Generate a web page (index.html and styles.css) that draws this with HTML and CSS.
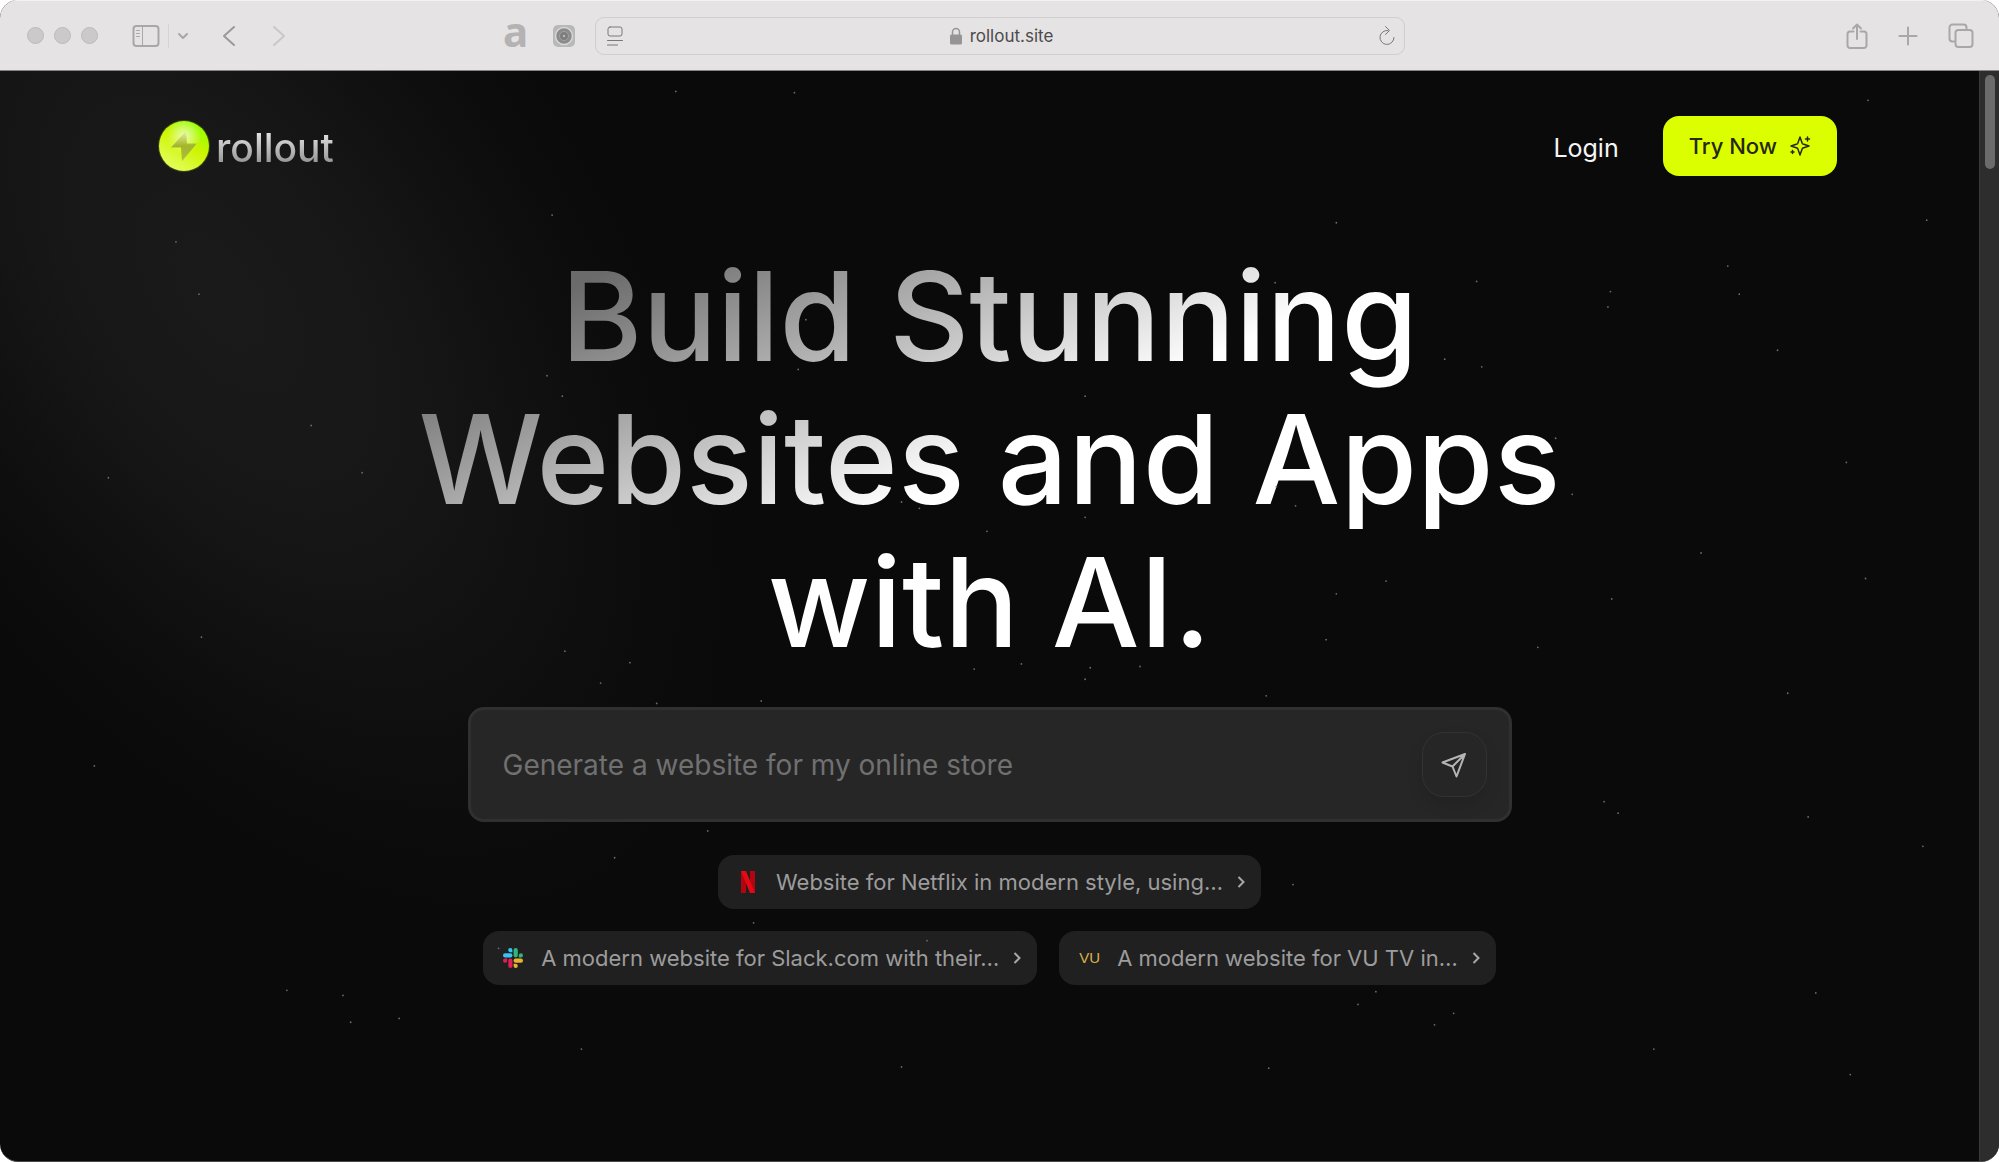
FILE: index.html
```
<!DOCTYPE html>
<html lang="en">
  <head>
    <meta charset="UTF-8" />
    <meta name="viewport" content="width=device-width, initial-scale=1.0" />
    <title>rollout</title>
    <link rel="stylesheet" href="styles.css">
  </head>
  <body>
    <div class="window">
      <header class="toolbar">
        <div class="toolbar-left">
          <div class="lights"><span></span><span></span><span></span></div>
          <button class="tool sidebar-btn" aria-label="Sidebar">
            <svg width="28" height="24" viewBox="0 0 28 24"><rect x="1.500" y="2" width="25" height="20" rx="3" /><path d="M10.500 2v20M4.500 6.500h3M4.500 9.500h3M4.500 12.500h3" /></svg>
          </button>
          <span class="divider"></span>
          <button class="tool menu-btn" aria-label="Tab groups">
            <svg width="12" height="12" viewBox="0 0 12 12"><path d="M2 4l4 4 4-4" /></svg>
          </button>
          <button class="tool back-btn" aria-label="Back">
            <svg width="14" height="22" viewBox="0 0 14 22"><path d="M12 2L2 11l10 9" /></svg>
          </button>
          <button class="tool forward-btn" aria-label="Forward">
            <svg width="14" height="22" viewBox="0 0 14 22"><path d="M2 2l10 9-10 9" /></svg>
          </button>
        </div>
        <div class="toolbar-middle">
          <button class="tool ext-a">a</button>
          <button class="tool ext-cam" aria-label="Camera extension">
            <svg width="22" height="22" viewBox="0 0 22 22"><rect width="22" height="22" rx="5" fill="#b9b8b9" stroke="none" /><circle cx="11" cy="11" r="8.500" fill="#8c8b8c" stroke="#d9d8d9" stroke-width="1.500" /><circle cx="11" cy="11" r="4.500" fill="#7d7c7d" stroke="#a3a2a3" stroke-width="1" /><circle cx="11" cy="11" r="1.200" fill="#bbb" stroke="none" /></svg>
          </button>
          <div class="address">
            <button class="tool reader-btn" aria-label="Reader">
              <svg width="18" height="22" viewBox="0 0 18 22"><rect x="2" y="2" width="14" height="9" rx="2" /><path d="M1.500 15.500h15M1.500 20h10" /></svg>
            </button>
            <a class="url" href="#">
              <svg width="14" height="18" viewBox="0 0 14 18"><path d="M3.500 8V5a3.500 3.500 0 0 1 7 0v3" fill="none" stroke="#969596" stroke-width="1.500" /><rect x="1" y="7.500" width="12" height="10" rx="1.500" fill="#969596" /></svg>
              <span>rollout.site</span>
            </a>
            <button class="tool reader-btn" aria-label="Reload">
              <svg width="18" height="22" viewBox="0 0 18 22"><path d="M10 5.500A7 7 0 1 0 16 12.500M7.500 1.500l4 4-4 4" /></svg>
            </button>
          </div>
        </div>
        <div class="toolbar-right">
          <button class="tool" aria-label="Share">
            <svg width="22" height="28" viewBox="0 0 22 28"><path d="M7.500 9.500H4a2.500 2.500 0 0 0-2.500 2.500v11.500A2.500 2.500 0 0 0 4 26h14a2.500 2.500 0 0 0 2.500-2.500V12A2.500 2.500 0 0 0 18 9.500h-3.500M11 17V2.500M7 6.500l4-4 4 4" /></svg>
          </button>
          <button class="tool" aria-label="New tab">
            <svg width="20" height="20" viewBox="0 0 20 20"><path d="M10 1.500v17M1.500 10h17" /></svg>
          </button>
          <button class="tool" aria-label="Show tabs">
            <svg width="26" height="26" viewBox="0 0 26 26"><rect x="7.500" y="7" width="17" height="17" rx="3" /><path d="M7 18.500H4.500a3 3 0 0 1-3-3v-11a3 3 0 0 1 3-3h11a3 3 0 0 1 3 3V6.500" /></svg>
          </button>
        </div>
      </header>

      <div class="viewport">
        <div class="page">
          <div class="spotlight"></div>

          <nav class="nav">
            <a class="logo" href="#">
              <svg width="54" height="54" viewBox="0 0 54 54">
                <defs>
                  <linearGradient id="ball" x1="0.200" y1="1" x2="0.800" y2="0"><stop offset="0" stop-color="#e6ff6a" /><stop offset="0.550" stop-color="#cdf500" /><stop offset="1" stop-color="#8dff00" /></linearGradient>
                  <radialGradient id="shine" cx="0.500" cy="0.300" r="0.350"><stop offset="0" stop-color="#fff" stop-opacity="0.700" /><stop offset="1" stop-color="#fff" stop-opacity="0" /></radialGradient>
                  <linearGradient id="bolt" x1="0" y1="0" x2="0" y2="1"><stop offset="0" stop-color="#e9f6a0" /><stop offset="0.500" stop-color="#a3b52a" /><stop offset="1" stop-color="#aebf3c" /></linearGradient>
                </defs>
                <circle cx="27" cy="27" r="26" fill="#5b7a00" opacity="0.500" />
                <circle cx="27" cy="27" r="25" fill="url(#ball)" />
                <circle cx="27" cy="27" r="25" fill="url(#shine)" />
                <path d="M29 12L14 28.500h10L25 42l15-17.500H30z" fill="url(#bolt)" />
              </svg>
              <span>rollout</span>
            </a>
            <div class="nav-actions">
              <a class="login" href="#">Login</a>
              <button class="try-now">
                Try Now
                <svg width="22" height="22" viewBox="0 0 22 22"><path d="M11 2l2.200 6.200a1.500 1.500 0 0 0 .8.8L20 11l-6 2a1.500 1.500 0 0 0-.8.8L11 20l-2.200-6.200A1.500 1.500 0 0 0 8 13L2 11l6-2a1.500 1.500 0 0 0 .8-.8zM18.500 2v4M16.500 4h4M3.500 15.500v3M2 17h3" /></svg>
              </button>
            </div>
          </nav>

          <main class="hero">
            <h1>Build Stunning<br />Websites and Apps<br />with AI.</h1>

            <form class="prompt">
              <input type="text" aria-label="Describe your website" placeholder="Generate a website for my online store" />
              <button type="button" class="send" aria-label="Send">
                <svg width="28" height="28" viewBox="0 0 28 28"><path d="M25 3L2.500 11.500l10 4 4 10zM25 3L12.500 15.500" /></svg>
              </button>
            </form>

            <div class="chips">
              <button class="chip">
                <svg class="brand" width="20" height="22" viewBox="0 0 20 22"><path fill="#b1060f" d="M3 0h5v22H3zM12 0h5v22h-5z" /><path fill="#e50914" d="M3 0h5l9 22h-5z" /></svg>
                <span>Website for Netflix in modern style, using…</span>
                <svg class="arrow" width="8" height="14" viewBox="0 0 8 14"><path d="M1.500 2l5 5-5 5" /></svg>
              </button>
              <button class="chip">
                <svg class="brand" width="20" height="20" viewBox="0 0 20 20">
                  <g fill="#36c5f0"><rect x="0" y="5.300" width="9.400" height="4.200" rx="2.100" /><path d="M7.300 0a2.100 2.100 0 0 1 2.100 2.100v2.100H7.300a2.100 2.100 0 0 1 0-4.200z" /></g>
                  <g fill="#2eb67d"><rect x="10.600" y="0" width="4.200" height="9.400" rx="2.100" /><path d="M20 7.400a2.100 2.100 0 0 1-2.100 2.100h-2.100V7.400a2.100 2.100 0 0 1 4.200 0z" /></g>
                  <g fill="#ecb22e"><rect x="10.600" y="10.600" width="9.400" height="4.200" rx="2.100" /><path d="M12.700 20a2.100 2.100 0 0 1-2.100-2.100v-2.100h2.100a2.100 2.100 0 0 1 0 4.200z" /></g>
                  <g fill="#e01e5a"><rect x="5.300" y="10.600" width="4.200" height="9.400" rx="2.100" /><path d="M0 12.700a2.100 2.100 0 0 1 2.100-2.100h2.100v2.100a2.100 2.100 0 0 1-4.200 0z" /></g>
                </svg>
                <span>A modern website for Slack.com with their…</span>
                <svg class="arrow" width="8" height="14" viewBox="0 0 8 14"><path d="M1.500 2l5 5-5 5" /></svg>
              </button>
              <button class="chip">
                <b class="brand vu">VU</b>
                <span>A modern website for VU TV in…</span>
                <svg class="arrow" width="8" height="14" viewBox="0 0 8 14"><path d="M1.500 2l5 5-5 5" /></svg>
              </button>
            </div>
          </main>

          <!-- stars, one zero length stroke each -->
          <svg class="stars" viewBox="0 55 1552 856" preserveAspectRatio="xMidYMin slice" aria-hidden="true">
            <path d="M530 71h0M623 72h0M1465 78h0M433 168h0M138 189h0M156 230h0M1048 174h0M1511 172h0M1355 208h0M1158 220h0M1263 228h0M1364 230h0M1261 240h0M1000 221h0M632 250h0M1394 274h0M1133 281h0M1162 287h0M429 294h0M441 310h0M626 289h0M851 310h0M244 333h0M284 370h0M85 374h0M1448 362h0M1220 343h0M1233 387h0M707 393h0M721 398h0M774 416h0M851 405h0M1016 396h0M1001 381h0M1334 433h0M1463 453h0M1087 455h0M1048 465h0M1264 469h0M158 499h0M1040 501h0M1206 507h0M443 510h0M494 519h0M471 535h0M764 524h0M801 520h0M855 523h0M851 532h0M894 522h0M993 545h0M515 551h0M597 549h0M1402 543h0M74 600h0M1258 628h0M1269 637h0M1418 640h0M1508 663h0M555 651h0M482 672h0M1014 693h0M591 723h0M727 737h0M391 743h0M1424 778h0M1079 777h0M1065 787h0M225 776h0M269 780h0M275 801h0M313 798h0M1140 794h0M1125 803h0M1297 822h0M456 822h0M707 836h0M995 837h0M1451 842h0" />
          </svg>
        </div>
        <div class="scrollbar"><div class="thumb"></div></div>
      </div>
    </div>
  </body>
</html>
```
FILE: styles.css
```
* {
  box-sizing: border-box;
}

body {
  margin: 0;
  background: #ffffff;
  font-family: Inter, "Liberation Sans", sans-serif;
}

button {
  padding: 0;
  border: 0;
  background: none;
  font-family: inherit;
  cursor: pointer;
}

svg {
  display: block;
  flex: none;
}

a {
  text-decoration: none;
}

.window {
  min-height: 100vh;
  display: flex;
  flex-direction: column;
  overflow: hidden;
  border-radius: 18px;
  border-bottom: 1px solid #4a484a;
  background: #0a0a0a;
}

/* browser toolbar */
.toolbar {
  height: 71px;
  display: flex;
  align-items: center;
  padding: 0 25px 0 27px;
  border-top: 1px solid #f3f2f3;
  border-bottom: 1px solid #858585;
  background: #e5e3e4;
}

.toolbar-left,
.toolbar-middle,
.toolbar-right,
.lights {
  display: flex;
  align-items: center;
}

.toolbar-left {
  width: 476px;
}

.lights {
  gap: 10px;
}

.lights span {
  width: 17px;
  height: 17px;
  border-radius: 50%;
  border: 1px solid #bcbabb;
  background: #cbc9ca;
}

.tool svg {
  fill: none;
  stroke: #a9a7a8;
  stroke-width: 2;
  stroke-linecap: round;
  stroke-linejoin: round;
}

.sidebar-btn {
  margin-left: 34px;
}

.sidebar-btn path {
  stroke-width: 1;
}

.divider {
  width: 1px;
  height: 24px;
  margin: 0 8px;
  background: #d5d3d4;
}

.back-btn {
  margin-left: 33px;
}

.back-btn svg {
  stroke: #9b999a;
}

.forward-btn {
  margin-left: 36px;
}

.forward-btn svg {
  stroke: #c9c7c8;
}

.toolbar-middle {
  width: 902px;
}

.ext-a {
  width: 22px;
  color: #b4b2b3;
  font: bold 42px/42px "Noto Sans", sans-serif;
  padding-bottom: 10px;
}

.ext-cam {
  margin: 0 20px 0 28px;
}

.address {
  flex: 1;
  height: 38px;
  display: flex;
  align-items: center;
  justify-content: space-between;
  padding: 0 8px 0 10px;
  border: 1px solid #cfcdce;
  border-radius: 9px;
}

.reader-btn svg {
  stroke: #7a797a;
  stroke-width: 1px;
}

.url {
  display: flex;
  align-items: center;
  gap: 7px;
  color: #4c4b4c;
  font-size: 17px;
}

.toolbar-right {
  gap: 30px;
  margin-left: auto;
}

/* page */
.viewport {
  flex: 1;
  display: flex;
}

.page {
  flex: 1;
  position: relative;
  overflow: hidden;
}

.scrollbar {
  width: 20px;
  padding: 4px 4px 0 5px;
  border-left: 1px solid #3a3a3a;
  background: #2d2d2d;
}

.thumb {
  height: 94px;
  border-radius: 6px;
  background: #6b6b6b;
}

.spotlight {
  position: absolute;
  top: -480px;
  left: -160px;
  width: 760px;
  height: 1400px;
  transform: rotate(-34deg);
  background: radial-gradient(closest-side, #1a1a1a 0%, #171717 35%, #0e0e0e 75%, #0a0a0a 100%);
}

.stars {
  position: absolute;
  top: 0;
  left: 0;
  width: 100%;
  height: 100%;
  pointer-events: none;
  fill: none;
  stroke: #6c6c6c;
  stroke-width: 1.400;
  stroke-linecap: round;
}

.nav {
  position: relative;
  display: flex;
  align-items: center;
  justify-content: space-between;
  padding: 45px 142px 0 157px;
}

.logo {
  display: flex;
  align-items: center;
  gap: 5px;
}

.logo span {
  padding-top: 4px;
  font-size: 39px;
  line-height: 50px;
  font-weight: 500;
  color: transparent;
  background: linear-gradient(180deg, #f0f0f0 15%, #8a8a8a 90%);
  background-clip: text;
  -webkit-background-clip: text;
}

.nav-actions {
  display: flex;
  align-items: center;
  gap: 44px;
}

.login {
  padding-top: 4px;
  color: #f5f5f5;
  font-size: 25px;
}

.try-now {
  display: flex;
  align-items: center;
  gap: 12px;
  height: 60px;
  padding: 0 26px;
  border-radius: 16px;
  color: #26280f;
  background: #dcff00;
  font-size: 22px;
  font-weight: 500;
}

.try-now svg {
  fill: none;
  stroke: #26280f;
  stroke-width: 1.500;
  stroke-linecap: round;
  stroke-linejoin: round;
}

.hero {
  position: relative;
  display: flex;
  flex-direction: column;
  align-items: center;
}

h1 {
  margin: 69px 0 0;
  font-size: 124px;
  line-height: 143px;
  font-weight: 500;
  text-align: center;
  white-space: nowrap;
  color: transparent;
  background: linear-gradient(155deg, #6b6b6b 12%, #a8a8a8 28%, #ffffff 50%);
  background-clip: text;
  -webkit-background-clip: text;
}

.prompt {
  width: 1044px;
  max-width: 90%;
  display: flex;
  align-items: center;
  margin-top: 33px;
  padding: 22px 22px 22px 32px;
  border: 3px solid #303030;
  border-radius: 16px;
  background: #262626;
}

.prompt input {
  flex: 1;
  min-width: 0;
  padding: 0;
  border: 0;
  outline: 0;
  color: #ffffff;
  background: none;
  font: 28px/36px Inter, sans-serif;
}

.prompt input::placeholder {
  color: #707070;
}

.send {
  width: 65px;
  height: 65px;
  display: grid;
  place-items: center;
  border: 1px solid #323232;
  border-radius: 22px;
  box-shadow: 0 8px 16px rgba(0, 0, 0, 0.1);
}

.send svg {
  fill: none;
  stroke: #b5b5b5;
  stroke-width: 2;
  stroke-linejoin: round;
}

.chips {
  width: 1044px;
  max-width: 90%;
  display: flex;
  flex-wrap: wrap;
  justify-content: center;
  gap: 22px;
  margin-top: 33px;
}

.chip {
  height: 54px;
  display: flex;
  align-items: center;
  padding: 0 16px 0 20px;
  border-radius: 16px;
  color: #9c9c9c;
  background: #202020;
  font-size: 22px;
}

.brand {
  width: 20px;
  margin-right: 18px;
}

.vu {
  color: #d9b14a;
  font: 15px/20px "Liberation Sans", sans-serif;
}

.arrow {
  margin-left: 14px;
  fill: none;
  stroke: #a8a8a8;
  stroke-width: 2;
}
```
